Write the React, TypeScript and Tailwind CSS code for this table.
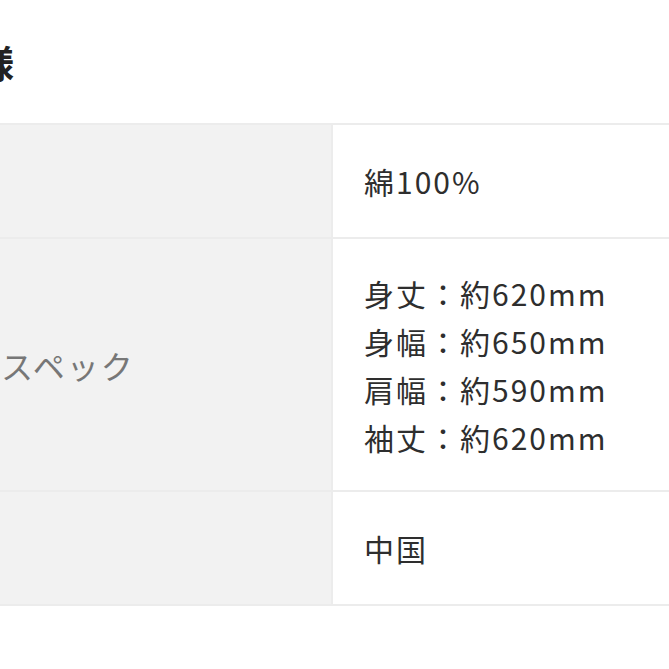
import React from "react";

interface SpecRow {
  label: string;
  values: string[];
  height: string;
}

const rows: SpecRow[] = [
  { label: "素材", values: ["綿100%"], height: "h-[114px]" },
  {
    label: "サイズスペック",
    values: [
      "身丈：約620mm",
      "身幅：約650mm",
      "肩幅：約590mm",
      "袖丈：約620mm",
    ],
    height: "h-[253px]",
  },
  { label: "産地", values: ["中国"], height: "h-[114px]" },
];

const App: React.FC = () => {
  return (
    <div
      className="h-[669px] w-[669px] overflow-hidden bg-white text-[#2e2e2e]"
      style={{ fontFamily: '"Noto Sans CJK JP", "Noto Sans", sans-serif' }}
    >
      <div className="-ml-[100px] w-[820px]">
        <div className="flex h-[123px] items-center pl-[38px]">
          <h2 className="text-[38px] font-bold leading-none text-[#222]">仕様</h2>
        </div>

        <div className="border-t-2 border-[#ececec]">
          {rows.map((row) => (
            <div
              key={row.label}
              className={`grid grid-cols-[433px_1fr] border-b-2 border-[#ececec] ${row.height}`}
            >
              <div className="flex items-center border-r-2 border-[#ececec] bg-[#f2f2f2] pl-0 text-[32px] tracking-[2px] text-[#777]">
                {row.label}
              </div>
              <div className="flex flex-col justify-center pl-[31px] text-[30px] leading-[48px] tracking-[2px]">
                {row.values.map((v) => (
                  <div key={v}>{v}</div>
                ))}
              </div>
            </div>
          ))}
        </div>
      </div>
    </div>
  );
};

export default App;
